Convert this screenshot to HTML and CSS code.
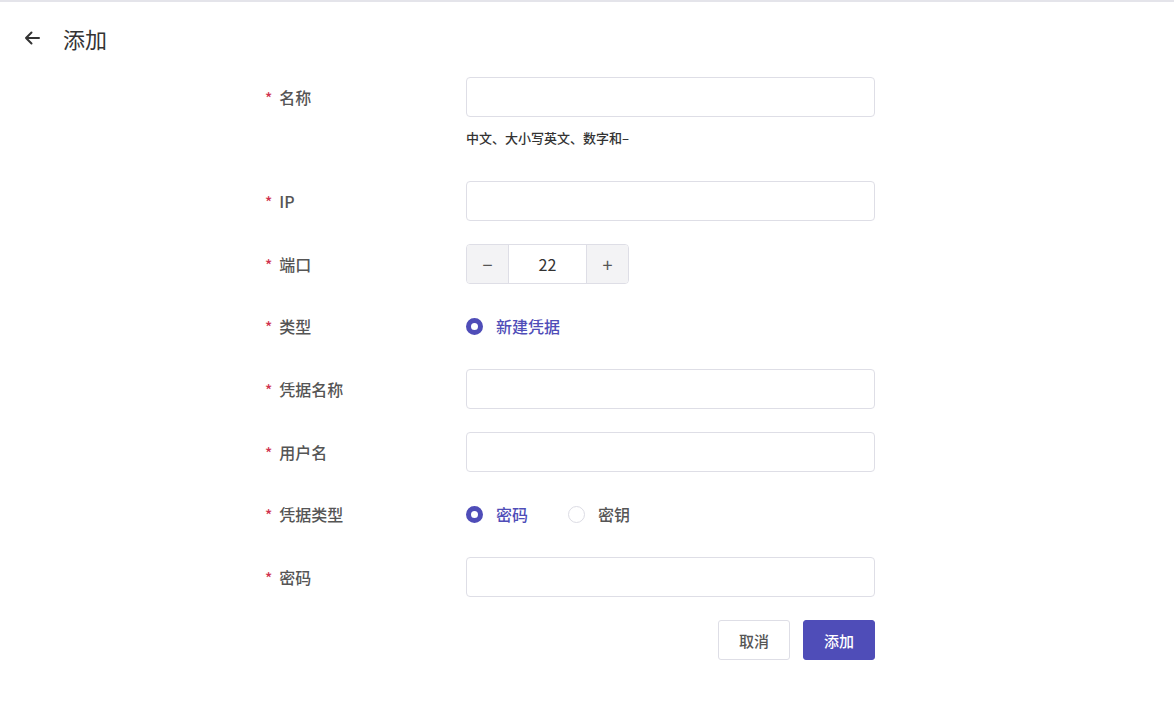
FILE: index.html
```html
<!DOCTYPE html>
<html lang="zh-CN">

<head>
    <meta charset="UTF-8">
    <meta name="viewport" content="width=device-width, initial-scale=1.0">
    <title>添加</title>
    <link rel="stylesheet" href="styles.css">
</head>

<body>
    <div class="header">
        <span class="back">
            <svg width="18" height="18" viewBox="0 0 18 18">
                <path d="M16 9H3M8.5 3.5L3 9l5.5 5.5" fill="none" stroke="#333" stroke-width="2" stroke-linecap="round" stroke-linejoin="round"/>
            </svg>
        </span>
        <h1 class="title">添加</h1>
    </div>

    <form class="form">
        <div class="row row-hint">
            <label class="label"><span class="req">*</span>名称</label>
            <div class="field">
                <input class="input" type="text">
                <div class="hint">中文、大小写英文、数字和–</div>
            </div>
        </div>

        <div class="row">
            <label class="label"><span class="req">*</span>IP</label>
            <div class="field"><input class="input" type="text"></div>
        </div>

        <div class="row">
            <label class="label"><span class="req">*</span>端口</label>
            <div class="field">
                <div class="stepper">
                    <span class="step">−</span>
                    <span class="step-value">22</span>
                    <span class="step">+</span>
                </div>
            </div>
        </div>

        <div class="row row-radio">
            <label class="label"><span class="req">*</span>类型</label>
            <div class="field radios">
                <span class="radio checked"><i></i>新建凭据</span>
            </div>
        </div>

        <div class="row">
            <label class="label"><span class="req">*</span>凭据名称</label>
            <div class="field"><input class="input" type="text"></div>
        </div>

        <div class="row">
            <label class="label"><span class="req">*</span>用户名</label>
            <div class="field"><input class="input" type="text"></div>
        </div>

        <div class="row row-radio">
            <label class="label"><span class="req">*</span>凭据类型</label>
            <div class="field radios">
                <span class="radio checked"><i></i>密码</span>
                <span class="radio"><i></i>密钥</span>
            </div>
        </div>

        <div class="row">
            <label class="label"><span class="req">*</span>密码</label>
            <div class="field"><input class="input" type="password"></div>
        </div>

        <div class="actions">
            <button type="button" class="btn">取消</button>
            <button type="button" class="btn btn-primary">添加</button>
        </div>
    </form>
</body>

</html>
```

FILE: styles.css
```css
body {
    margin: 0;
    font-family: "Noto Sans CJK SC", "Liberation Sans", sans-serif;
    color: #444;
    background: #fff;
    border-top: 2px solid #e4e4ea;
}

.header {
    display: flex;
    align-items: center;
    height: 74px;
    padding-left: 23px;
    box-sizing: border-box;
    padding-bottom: 2px;
}

.back {
    display: flex;
    width: 18px;
    height: 18px;
}

.title {
    margin: 0 0 0 22px;
    font-size: 22px;
    font-weight: normal;
    color: #333;
}

.form {
    width: 610px;
    margin-left: 265px;
    padding-top: 1px;
}

.row {
    display: flex;
    margin-bottom: 23px;
}

.row-hint {
    margin-bottom: 35px;
}

.label {
    width: 201px;
    flex-shrink: 0;
    height: 40px;
    line-height: 40px;
    font-size: 16px;
    font-weight: 500;
    color: #555;
}

.row-radio .label,
.row-radio .radios {
    height: 39px;
    line-height: 39px;
}

.req {
    color: #d0324e;
    margin-right: 7px;
    font-size: 15px;
}

.field {
    flex: 1;
}

.input {
    display: block;
    width: 100%;
    height: 40px;
    box-sizing: border-box;
    border: 1px solid #dedee6;
    border-radius: 4px;
    outline: none;
    padding: 0 12px;
    font-size: 14px;
}

.hint {
    margin-top: 12px;
    font-size: 13px;
    line-height: 17px;
    font-weight: 500;
    color: #333;
}

.stepper {
    display: inline-flex;
    height: 40px;
    border: 1px solid #dedee6;
    border-radius: 4px;
    box-sizing: border-box;
    overflow: hidden;
}

.step {
    width: 41px;
    background: #f3f3f5;
    display: flex;
    align-items: center;
    justify-content: center;
    font-size: 18px;
    color: #555;
}

.step-value {
    width: 77px;
    border-left: 1px solid #dedee6;
    border-right: 1px solid #dedee6;
    display: flex;
    align-items: center;
    justify-content: center;
    font-size: 16px;
    color: #333;
}

.radios {
    display: flex;
    align-items: center;
    height: 40px;
    gap: 40px;
}

.radio {
    display: flex;
    align-items: center;
    font-size: 16px;
    font-weight: 500;
    color: #555;
}

.radio i {
    width: 17px;
    height: 17px;
    box-sizing: border-box;
    border: 1px solid #dcdce4;
    border-radius: 50%;
    margin-right: 13px;
}

.radio.checked {
    color: #4f4db8;
}

.radio.checked i {
    border: 5px solid #4f4db8;
    background: #fff;
}

.actions {
    display: flex;
    justify-content: flex-end;
    gap: 13px;
    margin-top: 0;
}

.btn {
    height: 40px;
    padding: 0 20px;
    border: 1px solid #dedee6;
    border-radius: 3px;
    background: #fff;
    font-family: inherit;
    font-size: 15px;
    font-weight: 500;
    color: #555;
}

.btn-primary {
    background: #4f4db8;
    border-color: #4f4db8;
    color: #fff;
}
```
